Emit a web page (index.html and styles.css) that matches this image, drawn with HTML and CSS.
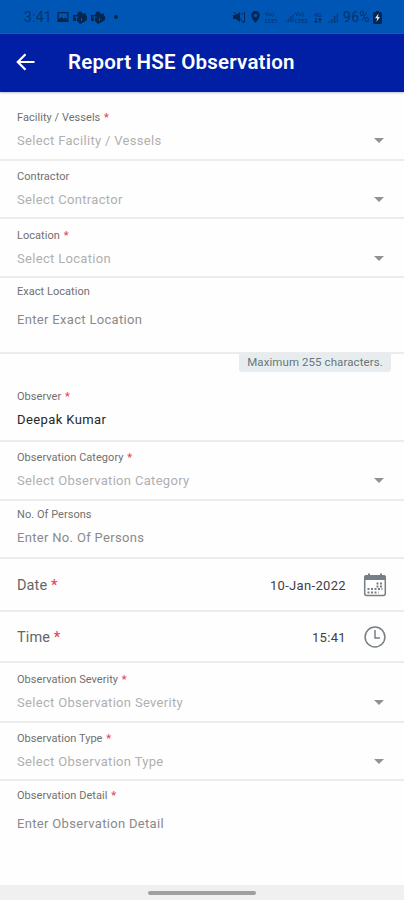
FILE: index.html
```
<!DOCTYPE html>
<html lang="en">
<head>
<meta charset="utf-8">
<title>Report HSE Observation</title>
<link rel="stylesheet" href="styles.css">
</head>
<body>
<div class="status">
  <div class="status-left">
    <span class="clock">3:41</span>
    <svg width="12" height="12" viewBox="0 0 12 12"><path fill-rule="evenodd" d="M.5 1h11v10H.5zM1.800 2.300v6l2.700-2.500 2 2 1.800-1 2 1.500v-6z"/></svg>
    <svg width="14" height="13" viewBox="0 0 14 13"><circle cx="7" cy="3" r="2.400"/><circle cx="11.500" cy="4" r="1.700"/><path fill-rule="evenodd" d="M0 4h4V3h6v2h4v4l-3 2-4 2-3-3H0zM1.500 5.500v1H3v3h1v-3h1.500v-1zM8 7v3h1V7z"/></svg>
    <svg width="14" height="13" viewBox="0 0 14 13"><circle cx="7" cy="3" r="2.400"/><circle cx="11.500" cy="4" r="1.700"/><path fill-rule="evenodd" d="M0 4h4V3h6v2h4v4l-3 2-4 2-3-3H0zM1.500 5.500v1H3v3h1v-3h1.500v-1zM8 7v3h1V7z"/></svg>
    <span class="dot"></span>
  </div>
  <div class="status-right">
    <svg class="mute" width="13" height="12" viewBox="0 0 13 12"><path d="M0 4h3l4-3v10L3 8H0z"/><path class="thin" d="M1 1l9 10M9 2v2M11.500 1v10H9"/></svg>
    <svg class="pin" width="9" height="12" viewBox="0 0 9 12"><path fill-rule="evenodd" d="M4.500 0C2 0 .2 1.900.2 4.300.2 7.500 4.500 12 4.500 12s4.300-4.500 4.300-7.700C8.800 1.900 7 0 4.500 0zm0 2.700a1.700 1.700 0 1 1 0 3.400 1.700 1.700 0 0 1 0-3.400z"/></svg>
    <span class="net"><span>Vo)</span><span>LTE1</span></span>
    <svg class="sig" width="8" height="11" viewBox="0 0 10 11"><path d="M0 9h1.500v2H0zM2.800 7h1.500v4H2.800zM5.500 4H7v7H5.500zM8.200 1h1.300v10H8.200z"/></svg>
    <span class="net"><span>Vo)</span><span>LTE2</span></span>
    <span class="net gap"><span>4G</span><svg width="8" height="5" viewBox="0 0 8 5"><path d="M1.500 0h1v3H4L2 5 0 3h1.500zM5.500 5h1V2H8L6 0 4 2h1.500z"/></svg></span>
    <svg class="sig last" width="11" height="11" viewBox="0 0 10 11"><path d="M0 9h1.500v2H0zM2.800 7h1.500v4H2.800zM5.500 4H7v7H5.500zM8.200 1h1.300v10H8.200z"/></svg>
    <span class="battery-text">96%</span>
    <svg width="9" height="13" viewBox="0 0 9 13"><path d="M3 0h3v1h1.500Q9 1 9 2.500v9Q9 13 7.500 13h-6Q0 13 0 11.500v-9Q0 1 1.500 1H3z"/><path class="bolt" d="M5.500 2.500L2 7.300h2.200l-.7 3.500L7 6H4.900z"/></svg>
  </div>
</div>
<header class="appbar">
  <svg class="back" width="20" height="18" viewBox="0 0 20 18"><path d="M18.500 9H2M9.500 1.300L1.800 9l7.700 7.700"/></svg>
  <h1>Report HSE Observation</h1>
</header>
<main class="form">
  <div class="field first"><div class="label">Facility / Vessels <b>*</b></div><div class="value select">Select Facility / Vessels<i class="caret"></i></div></div>
  <div class="field contractor"><div class="label">Contractor</div><div class="value select">Select Contractor<i class="caret"></i></div></div>
  <div class="field location"><div class="label">Location <b>*</b></div><div class="value select">Select Location<i class="caret"></i></div></div>
  <div class="field exact"><div class="label">Exact Location</div><div class="value enter">Enter Exact Location</div></div>
  <div class="field observer"><div class="hint">Maximum 255 characters.</div><div class="label">Observer <b>*</b></div><div class="value filled">Deepak Kumar</div></div>
  <div class="field category"><div class="label">Observation Category <b>*</b></div><div class="value select">Select Observation Category<i class="caret"></i></div></div>
  <div class="field persons"><div class="label">No. Of Persons</div><div class="value enter">Enter No. Of Persons</div></div>
  <div class="field inline date"><span class="name">Date <b>*</b></span><span class="picked">10-Jan-2022</span>
    <svg width="24" height="24" viewBox="0 0 24 24"><rect class="line" x="1.700" y="3" width="20.600" height="19.500" rx="2"/><path class="fill" d="M1 7V4q0-2 2-2h2V.5h2V2h10V.5h2V2h2q2 0 2 2v3z"/><path class="dots" d="M13.500 10.500h6M13.500 13.500h6M4.500 16h15M4.500 19.500h11"/></svg></div>
  <div class="field inline time"><span class="name">Time <b>*</b></span><span class="picked">15:41</span>
    <svg width="24" height="24" viewBox="0 0 24 24"><circle class="line" cx="12" cy="12" r="9.900"/><path class="line" d="M12 5v8h5"/></svg></div>
  <div class="field severity"><div class="label">Observation Severity <b>*</b></div><div class="value select">Select Observation Severity<i class="caret"></i></div></div>
  <div class="field type"><div class="label">Observation Type <b>*</b></div><div class="value select">Select Observation Type<i class="caret"></i></div></div>
  <div class="field detail"><div class="label">Observation Detail <b>*</b></div><div class="value enter">Enter Observation Detail</div></div>
</main>
<footer class="navbar"><span></span></footer>
</body>
</html>
```
FILE: styles.css
```
* { box-sizing: border-box; }
body {
  margin: 0;
  width: 404px;
  height: 900px;
  display: flex;
  flex-direction: column;
  overflow: hidden;
  background: #fefefe;
  font-family: Roboto, sans-serif;
}
svg { display: block; flex: none; }
.status {
  height: 34px;
  flex: none;
  display: flex;
  justify-content: space-between;
  padding: 0 22px 0 24px;
  background: #0056b5;
  color: #063369;
  fill: #04264f;
}
.status-left, .status-right { display: flex; align-items: center; }
.clock { width: 33px; font-size: 14px; letter-spacing: .2px; }
.status-left svg { margin-right: 4px; }
.dot { width: 4px; height: 4px; margin-left: 5px; border-radius: 50%; background: #04264f; }
.mute { margin-right: 5px; }
.thin { fill: none; stroke: #04264f; stroke-width: 1; }
.pin { margin-right: 5px; }
.net { display: flex; flex-direction: column; width: 17px; font-size: 6px; line-height: 7px; font-weight: 500; }
.sig { margin: 0 1px 0 4px; fill: #063a78; }
.sig.last { margin: 0 4px 0 5px; }
.net.gap { width: 9px; margin-left: 2px; }
.battery-text { font-size: 14px; width: 30px; letter-spacing: .3px; }
.bolt { fill: #d7e9ff; }
.appbar {
  height: 58px;
  flex: none;
  display: flex;
  align-items: center;
  padding: 0 0 2px 16px;
  background: #001fa5;
  box-shadow: 0 1px 2px #b9bdd0;
}
.back { fill: none; stroke: #fff; stroke-width: 2.200; }
h1 { margin: 0 0 0 32px; color: #fff; font-size: 20.500px; line-height: 24px; font-weight: 600; letter-spacing: .22px; }
.form { flex: 1; }
.field {
  height: 59px;
  padding: 8px 20px 0 17px;
  border-bottom: 2px solid #ececec;
}
.label { font-size: 11px; line-height: 16px; letter-spacing: .04px; color: #707070; white-space: nowrap; }
b { font-weight: 500; margin-left: 1px; color: #ef4354; }
.value {
  display: flex;
  align-items: center;
  justify-content: space-between;
  margin-top: 6px;
  font-size: 13px;
  line-height: 18px;
  letter-spacing: .32px;
}
.select { color: #b0b0b0; }
.enter { color: #8a8a8a; }
.filled { color: #262626; letter-spacing: .4px; }
.caret { border: 5px solid transparent; border-top: 5px solid #929292; border-bottom: 0; }
.select .caret { margin-top: -2px; }
.first { height: 68px; padding-top: 17px; }
.contractor { height: 58px; }
.location { height: 60px; padding-top: 9px; }
.first, .contractor { position: relative; top: 0; }
.exact { height: 76px; padding-top: 6px; }
.exact .value, .detail .value { margin-top: 11px; }
.observer { height: 89px; padding-top: 0; }
.hint {
  width: 152px;
  height: 19px;
  margin: -1px -7px 17px auto;
  border-radius: 0 0 3px 3px;
  background: #e7edef;
  color: #697477;
  font-size: 11.500px;
  line-height: 19px;
  letter-spacing: .08px;
  text-align: center;
}
.category { height: 59px; }
.persons { height: 58px; padding-top: 6px; }
.inline { display: flex; align-items: center; height: 53px; padding: 1px 17px 0; }
.time { height: 51px; }
.name { flex: 1; font-size: 14.500px; letter-spacing: .1px; color: #666; }
.name b { margin-left: 0; }
.picked { margin-right: 17px; font-size: 13px; letter-spacing: .33px; color: #404040; }
.line { fill: none; stroke: #777f84; stroke-width: 1.500; }
.fill { fill: #777f84; }
.dots { stroke: #777f84; stroke-width: 1.800; stroke-dasharray: 2 1.500; }
.severity { height: 60px; padding-top: 9px; }
.type { height: 58px; }
.detail { border: 0; padding-top: 7px; }
.navbar { height: 15px; flex: none; display: flex; justify-content: center; background: #f0f0f0; }
.navbar span { width: 108px; height: 4px; margin-top: 6px; border-radius: 2px; background: #a0a0a0; }
.first { height: 69px; padding-top: 18px; }
.location { height: 59px; padding-top: 9px; }
.first, .contractor { position: static; }
```
